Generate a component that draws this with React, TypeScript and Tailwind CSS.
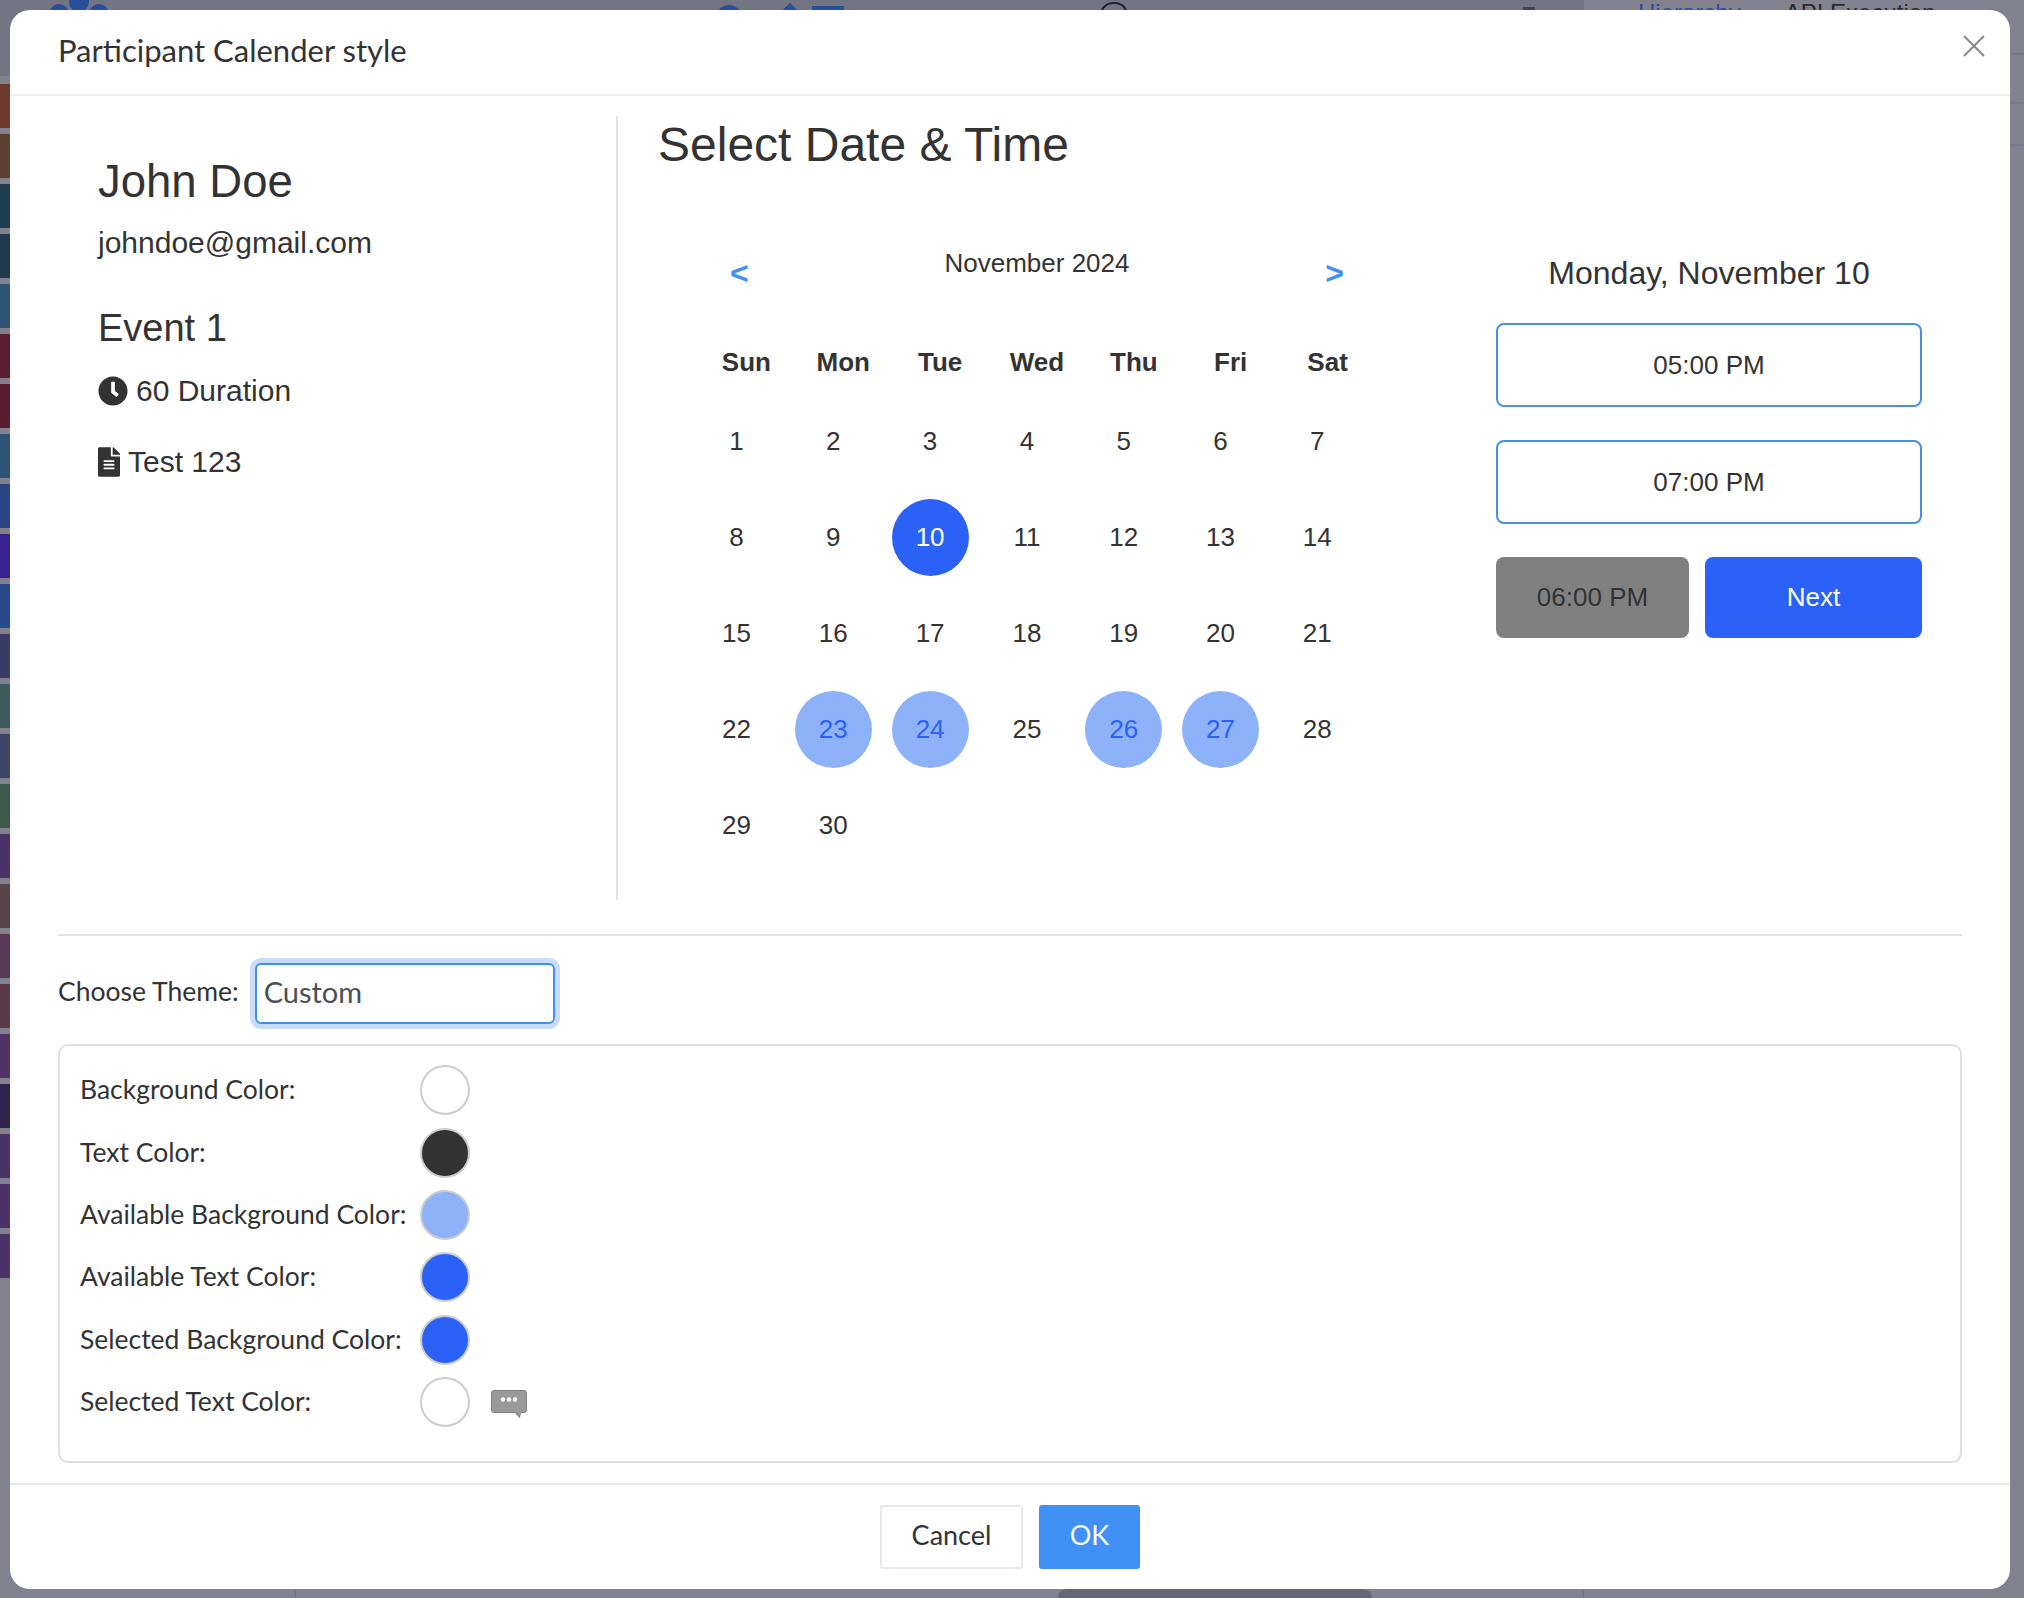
import { FaClock, FaFileAlt } from "react-icons/fa";

const stripColors = [
	"#6f3a2e", "#5e4030", "#1f3d4f", "#1f3a4c", "#2d5475", "#5a1f30",
	"#5a1e30", "#2c5275", "#2a4585", "#3a2290", "#27498a", "#3a3c68",
	"#3f5a5f", "#3d4668", "#3f5a4d", "#4a3268", "#584448", "#583a58",
	"#5a3a48", "#4e3268", "#30234d", "#4a3268", "#4c3268", "#4c3268",
];

const weekDays = ["Sun", "Mon", "Tue", "Wed", "Thu", "Fri", "Sat"];
const available = [23, 24, 26, 27];
const days = Array.from({ length: 30 }, (_, i) => i + 1);

const colorRows = [
	{ label: "Background Color:", color: "bg-white" },
	{ label: "Text Color:", color: "bg-[#333333]" },
	{ label: "Available Background Color:", color: "bg-[#8db2fa]" },
	{ label: "Available Text Color:", color: "bg-[#2b61f6]" },
	{ label: "Selected Background Color:", color: "bg-[#2b61f6]" },
	{ label: "Selected Text Color:", color: "bg-white" },
];

function ChatIcon() {
	return (
		<svg width="36" height="28" viewBox="0 0 36 28" className="mt-[3px] ml-[21px]">
			<path
				d="M3 0.5h30a2.5 2.5 0 0 1 2.5 2.5v17a2.5 2.5 0 0 1-2.5 2.5h-3.5l-1 5-4.5-5H3A2.5 2.5 0 0 1 0.5 20V3A2.5 2.5 0 0 1 3 0.5z"
				fill="#999999"
				stroke="#808080"
			/>
			<g fill="#ffffff">
				<circle cx="12" cy="9.5" r="2.2" />
				<circle cx="18" cy="9.5" r="2.2" />
				<circle cx="24" cy="9.5" r="2.2" />
			</g>
		</svg>
	);
}

function DayCell({ day }: { day: number }) {
	let tone = "text-[#333333]";
	if (day === 10) tone = "bg-[#2b61f6] text-white";
	if (available.includes(day)) tone = "bg-[#8db2fa] text-[#2b61f6]";
	return (
		<div className="flex h-[96px] w-[96.8px] items-start">
			<div
				className={`flex h-[77px] w-[77px] items-center justify-center rounded-full text-[26px] ${tone}`}
			>
				{day}
			</div>
		</div>
	);
}

function Calendar() {
	return (
		<div className="w-[678px] shrink-0 pt-[132px]">
			<div className="flex h-[54px] items-start justify-between px-[32px] text-[#4090f5]">
				<span className="mt-[5px] text-[32px] leading-[40px] font-bold">&lt;</span>
				<span className="text-[26px] leading-[30px] text-[#333333]">November 2024</span>
				<span className="mt-[5px] text-[32px] leading-[40px] font-bold">&gt;</span>
			</div>
			<div className="mt-[42px] grid grid-cols-7 text-center text-[26px] leading-[36px] font-bold text-[#333333]">
				{weekDays.map((d) => (
					<div key={d}>{d}</div>
				))}
			</div>
			<div className="mt-[23px] flex flex-wrap">
				{days.map((d) => (
					<DayCell key={d} day={d} />
				))}
			</div>
		</div>
	);
}

function TimePanel() {
	return (
		<div className="ml-[120px] flex w-[426px] shrink-0 flex-col pt-[137px] text-[26px] text-[#333333]">
			<div className="text-center text-[32px] leading-[40px]">Monday, November 10</div>
			<button type="button" className="mt-[30px] h-[84px] rounded-[8px] border-2 border-[#4a90e2] bg-white">
				05:00 PM
			</button>
			<button type="button" className="mt-[33px] h-[84px] rounded-[8px] border-2 border-[#4a90e2] bg-white">
				07:00 PM
			</button>
			<div className="mt-[33px] flex gap-[16px]">
				<button type="button" className="h-[81px] w-[193px] rounded-[8px] bg-[#808080]">
					06:00 PM
				</button>
				<button type="button" className="h-[81px] flex-1 rounded-[8px] bg-[#2b61f6] text-white">
					Next
				</button>
			</div>
		</div>
	);
}

// dimmed page behind the dialog, only its edges show
function Backdrop() {
	return (
		<div className="flex h-screen w-full bg-[#82828f] font-['Liberation_Sans',sans-serif]">
			<div className="flex min-w-0 flex-1 flex-col">
				<div className="flex h-[76px] items-start bg-[#737583]">
					<div className="ml-[49px] flex text-[#2a4f9a]">
						<div className="mt-[4px] h-[20px] w-[20px] rounded-full bg-current" />
						<div className="-mt-[8px] h-[20px] w-[20px] rounded-full bg-current" />
						<div className="mt-[4px] h-[20px] w-[20px] rounded-full bg-current" />
					</div>
					<div className="mt-[5px] ml-[607px] h-[26px] w-[26px] rounded-full bg-[#2a4f9a]" />
					<div className="mt-[6px] ml-[40px] h-[16px] w-[16px] rotate-45 bg-[#2a4f9a]" />
					<div className="mt-[6px] ml-[14px] h-[20px] w-[32px] bg-[#2a4f9a]" />
					<div className="mt-[2px] ml-[256px] h-[26px] w-[28px] rounded-full border-2 border-[#222230]" />
					<div className="mt-[7px] ml-[395px] h-[4px] w-[12px] bg-[#444450]" />
				</div>
				<div className="mt-[8px] flex w-[10px] flex-col gap-[6px]">
					{stripColors.map((c, i) => (
						<div key={i} className="h-[44px]" style={{ backgroundColor: c }} />
					))}
				</div>
				<div className="mt-auto flex h-[9px] border-r border-[#6e6e7a]">
					<div className="ml-[295px] w-px bg-[#6e6e7a]" />
					<div className="ml-[762px] w-[314px] rounded-t-[10px] bg-[#666673]" />
				</div>
			</div>
			<div className="w-[440px] shrink-0">
				<div className="flex h-[55px] gap-[44px] overflow-hidden border-b-2 border-[#77778a] pl-[54px] text-[24px] leading-[30px] text-[#2a2a30]">
					<span className="-mt-[2px] text-[#2a4f9a]">Hierarchy</span>
					<span className="-mt-[2px]">API Execution</span>
				</div>
				<div className="h-[49px] border-b-2 border-[#77778a]" />
				<div className="h-[42px] border-b-2 border-[#77778a]" />
			</div>
		</div>
	);
}

export default function App() {
	return (
		<div className="relative h-screen w-full overflow-hidden">
			<Backdrop />

			<div className="absolute top-[10px] left-[10px] flex h-[1579px] w-[2000px] flex-col rounded-[20px] bg-white font-['Lato',sans-serif] text-[#333333]">
				<div className="relative flex h-[86px] shrink-0 items-center border-b-2 border-[#f0f0f0] px-[48px] pb-[4px] text-[31px]">
					<span>Participant Calender style</span>
					<svg width="24" height="24" viewBox="0 0 24 24" className="absolute top-[24px] right-[24px]" stroke="#888888" strokeWidth="2">
						<path d="M2 2l20 20M22 2L2 22" />
					</svg>
				</div>

				<div className="flex-1 px-[48px] pt-[20px]">
					<div className="flex h-[784px] font-['Liberation_Sans',sans-serif]">
						<div className="w-[560px] shrink-0 border-r-2 border-[#e2e2e2] pt-[36px] pl-[40px]">
							<div className="text-[45.5px] leading-[60px]">John Doe</div>
							<div className="mt-[11px] text-[30px] leading-[40px]">johndoe@gmail.com</div>
							<div className="mt-[40px] text-[38px] leading-[50px]">Event 1</div>
							<div className="mt-[18px] flex items-center gap-[8px] text-[30px] leading-[40px]">
								<FaClock className="h-[30px] w-[30px]" />
								<span>60 Duration</span>
							</div>
							<div className="mt-[31px] flex items-center gap-[8px] text-[30px] leading-[40px]">
								<FaFileAlt className="h-[30px] w-[22px]" />
								<span>Test 123</span>
							</div>
						</div>
						<div className="flex-1 pl-[40px]">
							<div className="text-[48px] leading-[58px]">Select Date &amp; Time</div>
							<div className="-mt-[58px] flex pl-[40px]">
								<Calendar />
								<TimePanel />
							</div>
						</div>
					</div>

					<div className="mt-[34px] border-t-2 border-[#e2e2e2] pt-[27px]">
						<div className="flex items-center gap-[16px] text-[26.5px]">
							<span className="pb-[3px]">Choose Theme:</span>
							<input
								readOnly
								value="Custom"
								className="h-[61px] w-[300px] rounded-[6px] border-2 border-[#3f8ef5] bg-white px-[7px] pb-[4px] text-[29px] text-[#495057] shadow-[0_0_0_5px_#c9dcfb] outline-none"
							/>
						</div>
						<div className="mt-[20px] h-[419px] rounded-[10px] border-2 border-[#dedede] px-[20px] pt-[13px] text-[26.5px]">
							{colorRows.map((row, i) => (
								<div key={row.label} className="flex h-[62.4px] items-center">
									<span className="w-[340px] shrink-0 whitespace-nowrap">{row.label}</span>
									<span className={`h-[50px] w-[50px] rounded-full border-2 border-[#cccccc] ${row.color}`} />
									{i === 5 && <ChatIcon />}
								</div>
							))}
						</div>
					</div>
				</div>

				<div className="flex h-[106px] shrink-0 justify-center gap-[16px] border-t-2 border-[#e8e8e8] pt-[20px] text-[27px]">
					<button type="button" className="h-[64px] w-[143px] rounded-[3px] border-2 border-[#e5e8ee] bg-white pb-[3px]">
						Cancel
					</button>
					<button type="button" className="h-[64px] w-[101px] rounded-[3px] bg-[#4090f5] pb-[3px] text-white">
						OK
					</button>
				</div>
			</div>
		</div>
	);
}
